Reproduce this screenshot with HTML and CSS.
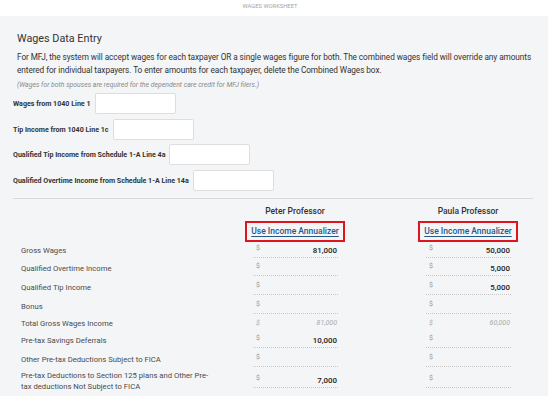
FILE: index.html
```html
<!DOCTYPE html>
<html lang="en">
<head>
  <meta charset="UTF-8" />
  <title>Wages Worksheet</title>
  <link rel="stylesheet" href="styles.css">
</head>
<body>

  <div class="topbar">WAGES WORKSHEET</div>

  <main class="sheet">
    <h1>Wages Data Entry</h1>
    <p class="intro">For MFJ, the system will accept wages for each taxpayer OR a single wages figure for both. The combined wages field will override any amounts entered for individual taxpayers. To enter amounts for each taxpayer, delete the Combined Wages box.</p>
    <p class="note">(Wages for both spouses are required for the dependent care credit for MFJ filers.)</p>

    <!-- Combined fields -->
    <div class="fields">
      <div class="field"><label>Wages from 1040 Line 1</label><span class="box"></span></div>
      <div class="field"><label>Tip Income from 1040 Line 1c</label><span class="box"></span></div>
      <div class="field"><label>Qualified Tip Income from Schedule 1-A Line 4a</label><span class="box"></span></div>
      <div class="field"><label>Qualified Overtime Income from Schedule 1-A Line 14a</label><span class="box"></span></div>
    </div>

    <hr class="divider">

    <!-- Per taxpayer table -->
    <div class="grid head">
      <div></div>
      <div class="name">Peter Professor</div>
      <div></div>
      <div class="name">Paula Professor</div>
    </div>
    <div class="grid links">
      <div></div>
      <div class="mark"><a href="#">Use Income Annualizer</a></div>
      <div></div>
      <div class="mark"><a href="#">Use Income Annualizer</a></div>
    </div>

    <div class="rows">
      <div class="grid row">
        <div class="label">Gross Wages</div>
        <div class="cell"><span class="cur">$</span><span class="val">81,000</span></div>
        <div></div>
        <div class="cell"><span class="cur">$</span><span class="val">50,000</span></div>
      </div>
      <div class="grid row">
        <div class="label">Qualified Overtime Income</div>
        <div class="cell"><span class="cur">$</span><span class="val"></span></div>
        <div></div>
        <div class="cell"><span class="cur">$</span><span class="val">5,000</span></div>
      </div>
      <div class="grid row">
        <div class="label">Qualified Tip Income</div>
        <div class="cell"><span class="cur">$</span><span class="val"></span></div>
        <div></div>
        <div class="cell"><span class="cur">$</span><span class="val">5,000</span></div>
      </div>
      <div class="grid row">
        <div class="label">Bonus</div>
        <div class="cell"><span class="cur">$</span><span class="val"></span></div>
        <div></div>
        <div class="cell"><span class="cur">$</span><span class="val"></span></div>
      </div>
      <div class="grid row total">
        <div class="label">Total Gross Wages Income</div>
        <div class="cell"><span class="cur">$</span><span class="val">81,000</span></div>
        <div></div>
        <div class="cell"><span class="cur">$</span><span class="val">60,000</span></div>
      </div>
      <div class="grid row">
        <div class="label">Pre-tax Savings Deferrals</div>
        <div class="cell"><span class="cur">$</span><span class="val">10,000</span></div>
        <div></div>
        <div class="cell"><span class="cur">$</span><span class="val"></span></div>
      </div>
      <div class="grid row">
        <div class="label">Other Pre-tax Deductions Subject to FICA</div>
        <div class="cell"><span class="cur">$</span><span class="val"></span></div>
        <div></div>
        <div class="cell"><span class="cur">$</span><span class="val"></span></div>
      </div>
      <div class="grid row tall">
        <div class="label">Pre-tax Deductions to Section 125 plans and Other Pre-tax deductions Not Subject to FICA</div>
        <div class="cell"><span class="cur">$</span><span class="val">7,000</span></div>
        <div></div>
        <div class="cell"><span class="cur">$</span><span class="val"></span></div>
      </div>
    </div>
  </main>

</body>
</html>
```

FILE: styles.css
```css
* {
  box-sizing: border-box;
  margin: 0;
  padding: 0;
}

body {
  font-family: Roboto, 'Liberation Sans', sans-serif;
  background: #f4f5f7;
  color: #333;
  overflow: hidden;
}

/* Title strip */
.topbar {
  height: 16px;
  background: #fff;
  text-align: center;
  font-size: 5.8px;
  line-height: 12px;
  color: #a5a5a5;
  padding-right: 8px;
}

.sheet {
  padding: 16px 15px 0 13px;
}

h1 {
  font-size: 10.8px;
  font-weight: 400;
  line-height: 14px;
  color: #333;
  padding-left: 4px;
  margin-bottom: 5px;
}

.intro {
  font-size: 8.25px;
  letter-spacing: -0.08px;
  line-height: 13px;
  color: #333;
  padding-left: 4px;
  margin-right: -6px;
}

.note {
  font-size: 6.85px;
  font-style: italic;
  line-height: 12px;
  color: #8a8a8a;
  padding-left: 4px;
  margin-top: 2px;
}

/* Combined fields */
.fields {
  display: flex;
  flex-direction: column;
  gap: 4.6px;
  margin-top: 2px;
}

.field {
  display: flex;
  align-items: center;
  gap: 4px;
}

.field label {
  font-size: 7.1px;
  font-weight: 700;
  color: #333;
}

.box {
  width: 81px;
  height: 21px;
  background: #fff;
  border: 1px solid #dedede;
  border-radius: 2px;
}

.divider {
  border: none;
  border-top: 1px solid #d9d9d9;
  margin: 7px 0 0;
}

/* Taxpayer table */
.grid {
  display: grid;
  grid-template-columns: 232px 100px 73px 100px;
}

.head {
  margin-top: 6px;
}

.name {
  text-align: center;
  font-size: 8.5px;
  font-weight: 500;
  line-height: 12px;
  color: #333;
}

.links {
  margin-top: 4px;
}

.mark {
  height: 21px;
  border: 2px solid #e0141c;
  display: flex;
  align-items: center;
  justify-content: center;
}

.mark a {
  font-size: 8.5px;
  font-weight: 500;
  color: #23598a;
  text-decoration-thickness: 1px;
  text-underline-offset: 1.5px;
}

.rows {
  display: flex;
  flex-direction: column;
  gap: 3.67px;
  margin-top: 1px;
}

.row {
  height: 15px;
  align-items: center;
}

.label {
  padding-left: 8px;
  font-size: 7.7px;
  line-height: 11px;
  color: #4a4a4a;
}

.cell {
  height: 15px;
  margin: 0 7px 0 8px;
  border-bottom: 1px dotted #c8c8c8;
  display: flex;
  justify-content: space-between;
  padding: 0 1px 0 3px;
}

.cur {
  font-size: 7px;
  line-height: 11px;
  color: #9a9a9a;
}

.val {
  font-size: 7.9px;
  font-weight: 500;
  line-height: 16px;
  color: #222;
}

.total {
  height: 12px;
}

.total .cell {
  height: 12px;
  border-bottom: none;
}

.total .cur,
.total .val {
  font-style: italic;
  font-weight: 400;
  color: #a8a8a8;
  font-size: 7px;
  line-height: 12px;
}

.tall {
  height: 22px;
  align-items: start;
}

.tall .label {
  width: 200px;
}

.tall .cell {
  margin-top: 2.5px;
}
```
